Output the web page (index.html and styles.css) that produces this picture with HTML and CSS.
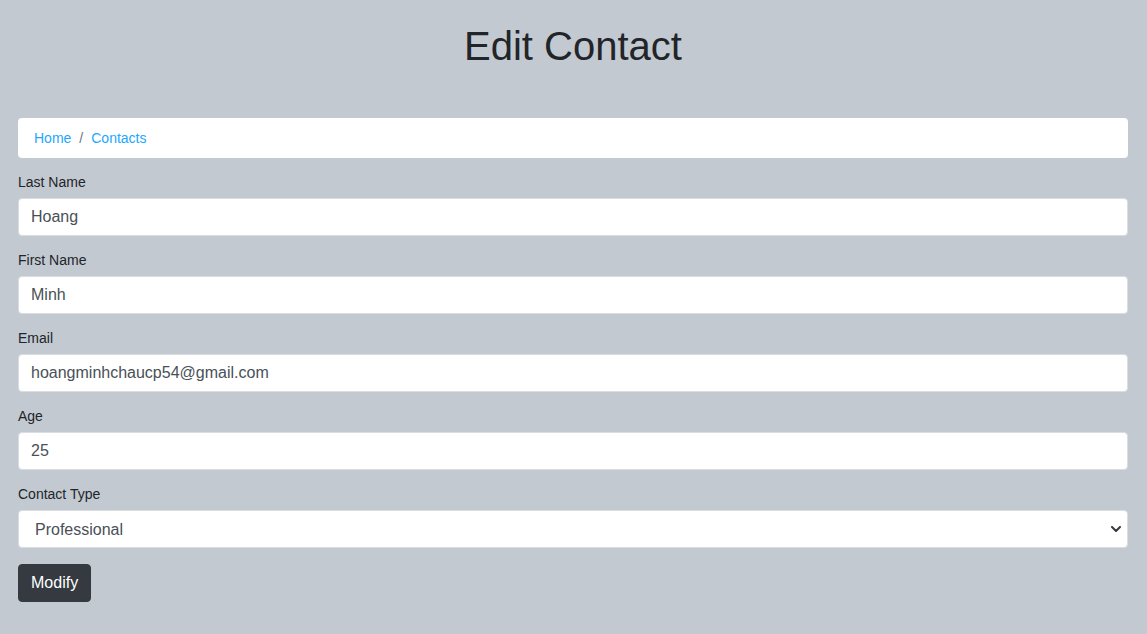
FILE: index.html
```html
<!DOCTYPE html>
<html lang="en">
<head>
<meta charset="utf-8">
<title>Edit Contact</title>
<link rel="stylesheet" href="styles.css">
</head>
<body>
<div class="page">
  <h1 class="title">Edit Contact</h1>
  <nav class="breadcrumb">
    <a href="#" class="crumb">Home</a>
    <span class="sep">/</span>
    <a href="#" class="crumb">Contacts</a>
  </nav>
  <form class="form">
    <div class="group">
      <label class="label" for="last">Last Name</label>
      <input class="control" id="last" type="text" value="Hoang">
    </div>
    <div class="group">
      <label class="label" for="first">First Name</label>
      <input class="control" id="first" type="text" value="Minh">
    </div>
    <div class="group">
      <label class="label" for="email">Email</label>
      <input class="control" id="email" type="text" value="hoangminhchaucp54@gmail.com">
    </div>
    <div class="group">
      <label class="label" for="age">Age</label>
      <input class="control" id="age" type="text" value="25">
    </div>
    <div class="group group-last">
      <label class="label" for="type">Contact Type</label>
      <div class="select-wrap">
        <select class="control select" id="type">
          <option>Professional</option>
          <option>Personal</option>
        </select>
        <svg class="chev" width="10" height="6" viewBox="0 0 10 6"><path d="M1 1 L5 5 L9 1" fill="none" stroke="#343a40" stroke-width="2" stroke-linecap="round" stroke-linejoin="round"/></svg>
      </div>
    </div>
    <button type="button" class="btn">Modify</button>
  </form>
</div>
</body>
</html>
```

FILE: styles.css
```css
html, body {
  margin: 0;
  padding: 0;
  background: #c3c9d1;
}
body {
  font-family: "Liberation Sans", Arial, sans-serif;
  color: #212529;
  font-size: 16px;
  line-height: 1.5;
}
.page {
  width: 1110px;
  margin: 0 0 0 18px;
  padding-bottom: 32px;
}
.title {
  margin: 22px 0 48px;
  font-size: 40px;
  font-weight: 400;
  line-height: 48px;
  text-align: center;
  color: #212529;
}
.breadcrumb {
  display: flex;
  align-items: center;
  height: 40px;
  box-sizing: border-box;
  padding: 0 16px;
  background: #fff;
  border-radius: 4px;
  font-size: 14px;
  margin-bottom: 12px;
}
.crumb {
  color: #1ea7fd;
  text-decoration: none;
}
.sep {
  color: #6c757d;
  padding: 0 8px;
}
.group {
  margin-bottom: 12px;
}
.group-last {
  margin-bottom: 16px;
}
.label {
  display: block;
  font-size: 14px;
  line-height: 24px;
  margin-bottom: 4px;
}
.control {
  display: block;
  width: 100%;
  height: 38px;
  box-sizing: border-box;
  padding: 6px 12px;
  font-family: inherit;
  font-size: 16px;
  line-height: 24px;
  color: #495057;
  background: #fff;
  border: 1px solid #d9dde2;
  border-radius: 4px;
  outline: none;
}
.select-wrap {
  position: relative;
}
.select {
  appearance: none;
  -webkit-appearance: none;
  padding: 7px 12px 5px 16px;
}
.chev {
  position: absolute;
  right: 7px;
  top: 16px;
  pointer-events: none;
}
.btn {
  display: inline-block;
  height: 38px;
  padding: 0 12px;
  font-family: inherit;
  font-size: 16px;
  color: #fff;
  background: #343a40;
  border: 1px solid #343a40;
  border-radius: 4px;
  cursor: pointer;
}
```
